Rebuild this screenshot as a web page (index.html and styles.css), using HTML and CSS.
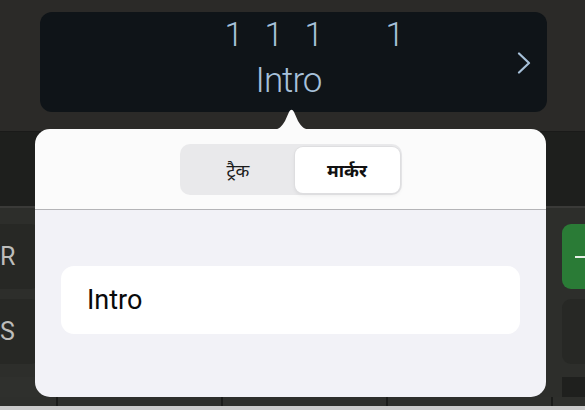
FILE: index.html
```html
<!DOCTYPE html>
<html lang="hi">
<head>
<meta charset="utf-8">
<title>Marker</title>
<link rel="stylesheet" href="styles.css">
</head>
<body>
<div class="app">
  <header class="topbar">
    <div class="display">
      <div class="lcd">
        <div class="position">
          <span class="digit">1</span>
          <span class="digit">1</span>
          <span class="digit">1</span>
          <span class="digit digit-far">1</span>
        </div>
        <div class="marker-name">Intro</div>
      </div>
      <svg class="chevron" width="14" height="22" viewBox="0 0 14 22"><path d="M2 1.5 L12 11 L2 20.5" fill="none" stroke="#a6c0d8" stroke-width="2.2" stroke-linecap="round" stroke-linejoin="round"/></svg>
    </div>
  </header>
  <div class="band"></div>
  <main class="tracks">
    <div class="track-controls left">
      <div class="tbtn">R</div>
      <div class="tbtn">S</div>
      <div class="strip"></div>
    </div>
    <div class="track-area"></div>
    <div class="track-controls right">
      <div class="tbtn green"><span class="plus"></span></div>
      <div class="tbtn"></div>
      <div class="strip dark"></div>
    </div>
  </main>
  <footer class="ruler">
    <span class="tick"></span>
    <span class="tick"></span>
    <span class="tick"></span>
    <span class="tick"></span>
  </footer>
  <div class="bottom-edge"></div>

  <svg class="arrow" width="40" height="22" viewBox="0 0 40 22"><path d="M0 22 C7 22 10 18 13 13 L17 4 Q19.5 -0.5 22 4 L26 13 C29 18 32 22 40 22 Z" fill="#fbfbfb"/></svg>
  <section class="popover">
    <div class="pop-head">
      <div class="segmented">
        <div class="seg">ट्रैक</div>
        <div class="seg active">मार्कर</div>
      </div>
    </div>
    <div class="pop-body">
      <div class="field">Intro</div>
    </div>
  </section>
</div>
</body>
</html>
```

FILE: styles.css
```css
* { box-sizing: border-box; }
html, body { margin: 0; padding: 0; }
body {
  width: 585px;
  height: 410px;
  overflow: hidden;
  background: #2a2a28;
  font-family: Roboto, "Noto Sans", "Noto Sans Devanagari", sans-serif;
}
.app {
  position: relative;
  width: 585px;
  height: 410px;
  display: flex;
  flex-direction: column;
  overflow: hidden;
}
.topbar {
  height: 132px;
  padding: 12px 38px 20px 40px;
  background: #2b2a28;
  border-bottom: 1px solid #1a1a19;
}
.display {
  height: 100px;
  background: #0f1418;
  border-radius: 12px;
  display: flex;
  align-items: center;
}
.lcd {
  flex: 1;
  display: flex;
  flex-direction: column;
  align-items: center;
  color: #a7c1da;
  font-weight: 300;
}
.position {
  align-self: flex-start;
  display: flex;
  height: 44px;
  margin-top: -10px;
  margin-left: 174px;
  font-size: 34px;
  line-height: 44px;
}
.digit {
  width: 40px;
  text-align: center;
}
.digit-far { margin-left: 41px; }
.marker-name {
  font-size: 35px;
  letter-spacing: -1px;
  line-height: 42px;
  margin-top: 4px;
  margin-left: 20px;
}
.chevron {
  margin-right: 16px;
  margin-top: 2px;
}
.band {
  height: 76px;
  background: #1e1f1d;
  border-bottom: 2px solid #3a3a38;
}
.tracks {
  height: 189px;
  display: flex;
  background: #2d2e2b;
}
.track-controls {
  display: flex;
  flex-direction: column;
  gap: 10px;
  padding-top: 16px;
}
.track-controls.left { width: 40px; }
.track-area { flex: 1; }
.track-controls.right { width: 23px; }
.tbtn {
  height: 65px;
  background: #272825;
  color: #bdbdbb;
  font-family: Roboto, sans-serif;
  font-size: 25px;
  display: flex;
  align-items: center;
}
.left .tbtn { padding-left: 0; border-radius: 0 9px 9px 0; }
.right .tbtn { border-radius: 9px 0 0 9px; }
.tbtn.green { background: #2a7b36; padding-left: 13px; }
.plus {
  width: 10px;
  height: 2px;
  background: #e8f0e8;
}
.strip {
  height: 20px;
  margin-top: 3px;
  background: #2f302d;
}
.strip.dark { background: #1f201e; }
.ruler {
  height: 9px;
  background: #2e2f2c;
  display: flex;
  padding-left: 56px;
  gap: 163px;
}
.tick {
  width: 2px;
  height: 9px;
  background: #1b1c1a;
}
.bottom-edge {
  height: 4px;
  background: #cbcbcb;
}
.arrow {
  position: absolute;
  left: 272px;
  top: 108px;
}
.popover {
  position: absolute;
  left: 35px;
  top: 129px;
  width: 511px;
  height: 268px;
  border-radius: 15px;
  overflow: hidden;
  display: flex;
  flex-direction: column;
}
.pop-head {
  height: 81px;
  background: #fbfbfb;
  border-bottom: 1px solid #b4b4b7;
  display: flex;
  justify-content: center;
  padding-top: 15px;
}
.segmented {
  width: 222px;
  height: 51px;
  background: #e9e9eb;
  border-radius: 10px;
  display: flex;
  padding: 3px 2px 2px 2px;
}
.seg {
  display: flex;
  align-items: center;
  justify-content: center;
  font-family: "Noto Sans", "Noto Sans Devanagari", sans-serif;
  font-size: 18px;
  color: #1b1b1b;
  border-radius: 8px;
}
.seg:first-child { flex: 0 0 113px; }
.seg.active {
  flex: 1;
  background: #ffffff;
  font-weight: 700;
  color: #111;
  box-shadow: 0 0 0 1px #dedee0, 0 2px 4px rgba(0,0,0,0.08);
}
.pop-body {
  flex: 1;
  background: #f2f2f7;
  padding: 56px 26px 0 26px;
}
.field {
  height: 68px;
  background: #ffffff;
  border-radius: 13px;
  padding-left: 26px;
  display: flex;
  align-items: center;
  font-family: Roboto, sans-serif;
  font-size: 27px;
  color: #0a0a0a;
}
```
